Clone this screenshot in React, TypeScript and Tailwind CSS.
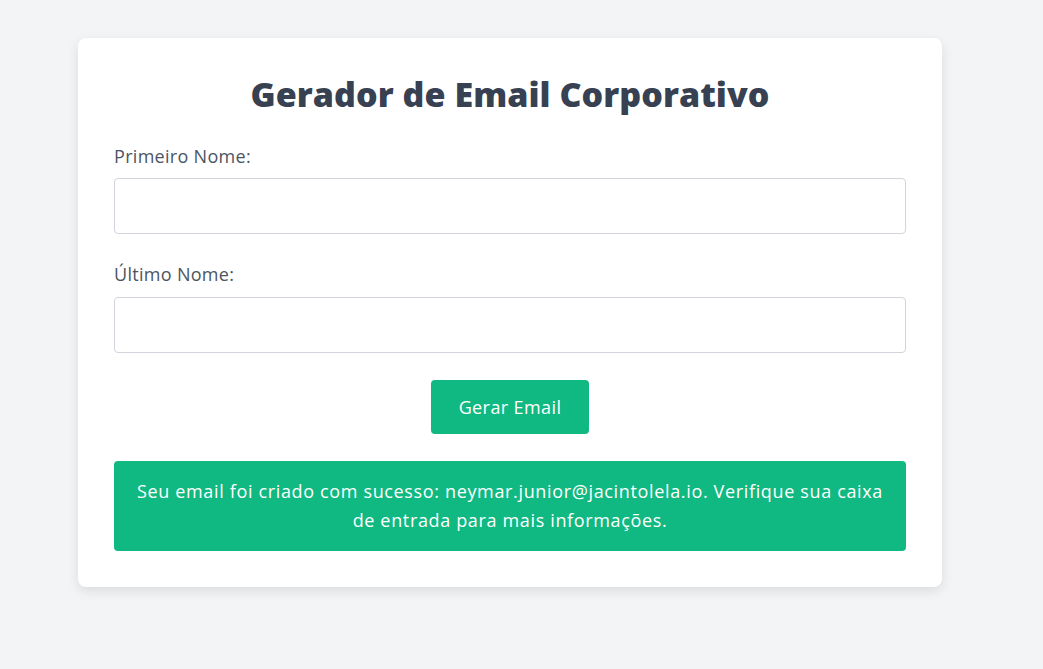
import React from "react";

export default function App() {
  return (
    <div className="min-h-[669px] w-full bg-[#f3f4f6] pt-[38px] pl-[78px]" style={{ fontFamily: '"Open Sans", "Noto Sans", sans-serif' }}>
      <div className="w-[864px] rounded-[8px] bg-white p-[36px] shadow-[0_4px_12px_rgba(0,0,0,0.1)]">
        <h1 className="mb-[30px] text-center text-[34px] font-extrabold leading-[40px] tracking-[0.05px] text-[#374151]">
          Gerador de Email Corporativo
        </h1>
        <label className="mb-[10px] block text-[18px] leading-[24px] tracking-[0.3px] text-[#4b5563]">Primeiro Nome:</label>
        <input className="mb-[28px] block h-[56px] w-full rounded-[4px] border border-[#d1d5db] bg-white px-3" />
        <label className="mb-[11px] block text-[18px] leading-[24px] tracking-[0.3px] text-[#4b5563]">Último Nome:</label>
        <input className="block h-[56px] w-full rounded-[4px] border border-[#d1d5db] bg-white px-3" />
        <div className="mt-[27px] flex justify-center">
          <button className="h-[54px] w-[158px] rounded-[4px] bg-[#10b981] text-[18px] tracking-[0.4px] text-white">Gerar Email</button>
        </div>
        <div className="mt-[27px] flex h-[90px] items-center justify-center rounded-[4px] bg-[#10b981] px-4 text-center text-[18px] leading-[29px] tracking-[0.65px] text-white">
          Seu email foi criado com sucesso: neymar.junior@jacintolela.io. Verifique sua caixa de entrada para mais informações.
        </div>
      </div>
    </div>
  );
}
